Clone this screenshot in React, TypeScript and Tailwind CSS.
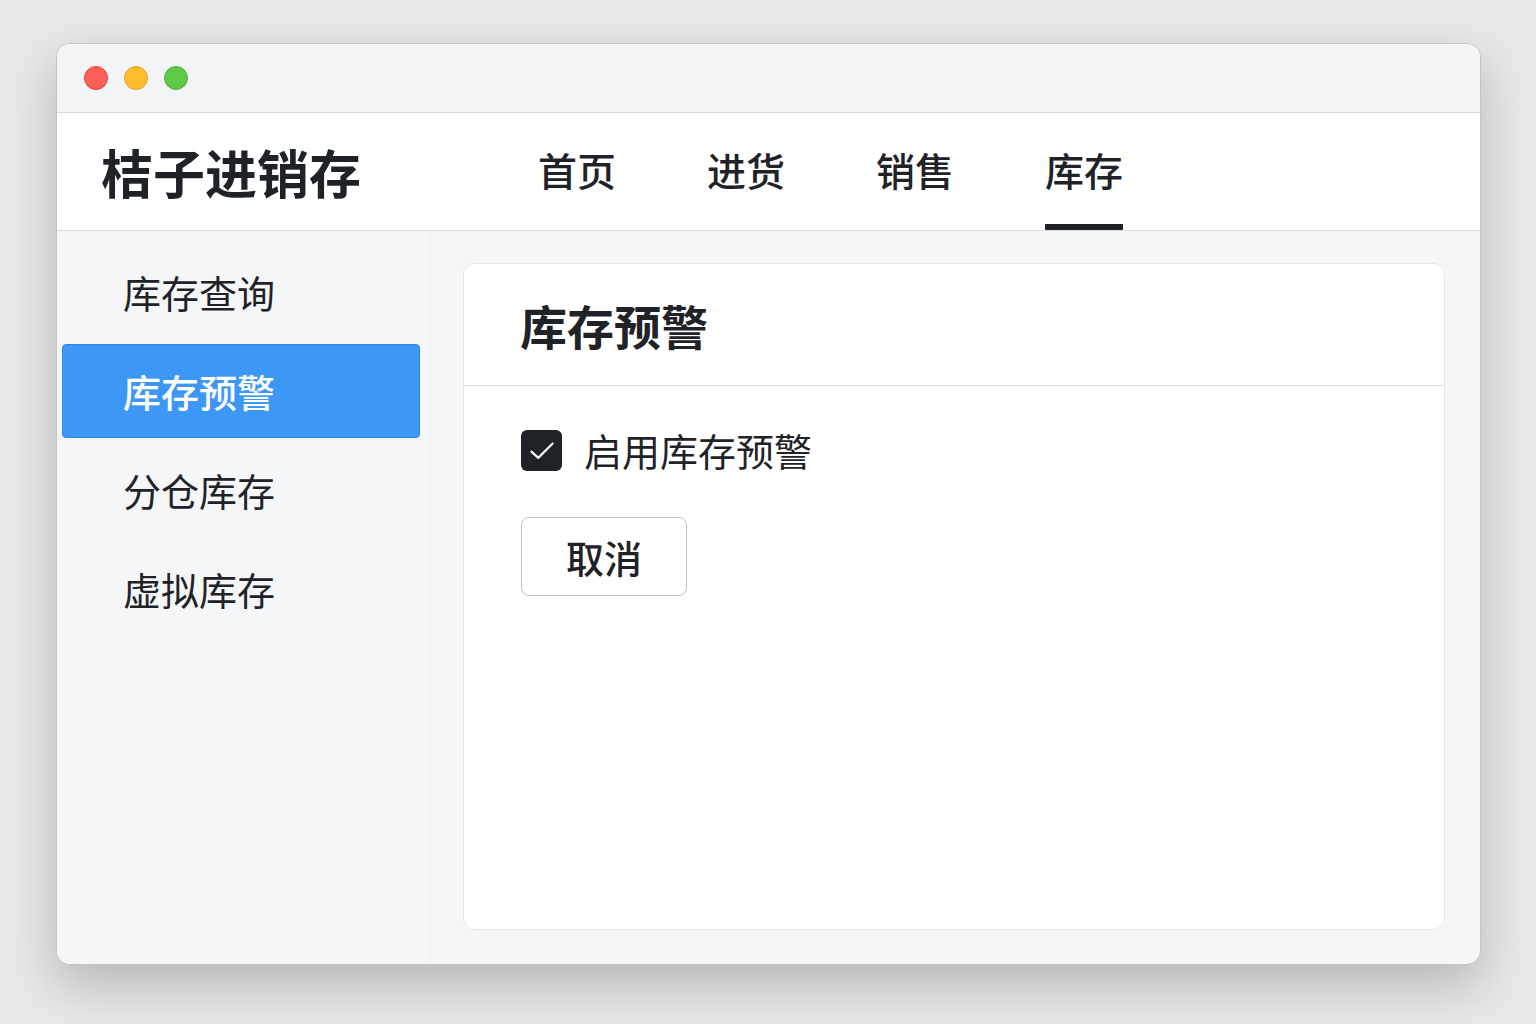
import React from "react";

const font = { fontFamily: '"Noto Sans CJK SC", "Noto Sans", sans-serif' };

export default function App() {
  const navs = ["首页", "进货", "销售", "库存"];
  const side = ["库存查询", "库存预警", "分仓库存", "虚拟库存"];
  return (
    <div className="w-[1536px] h-[1024px] bg-[#e8e8e8] pt-[43px] pl-[56px]" style={font}>
      <div className="w-[1425px] h-[922px] rounded-[14px] border border-[#c4c4c4] bg-[#f5f6f8] overflow-hidden flex flex-col shadow-[0_20px_50px_rgba(0,0,0,0.22)]">
        {/* title bar */}
        <div className="h-[69px] shrink-0 bg-[#f3f4f5] border-b border-[#d9d9d9] flex items-center pl-[27px] gap-[16px]">
          <div className="w-[24px] h-[24px] rounded-full bg-[#fe5f57] border border-[#e0443e]" />
          <div className="w-[24px] h-[24px] rounded-full bg-[#febc2e] border border-[#dea123]" />
          <div className="w-[24px] h-[24px] rounded-full bg-[#5fc846] border border-[#4caf38]" />
        </div>
        {/* header */}
        <div className="h-[118px] shrink-0 bg-white border-b border-[#dedede] flex items-stretch">
          <div className="w-[481px] pl-[44px] flex items-center text-[52px] font-bold text-[#1f2328] leading-none">
            桔子进销存
          </div>
          <div className="flex items-stretch gap-[91px]">
            {navs.map((n) => (
              <div key={n} className="relative flex items-center text-[39px] font-medium text-[#1f2328] leading-none">
                <span className="-mt-[4px]">{n}</span>
                {n === "库存" && (
                  <div className="absolute left-0 right-0 bottom-0 h-[6px] bg-[#1f2328]" />
                )}
              </div>
            ))}
          </div>
        </div>
        {/* body */}
        <div className="flex flex-1 min-h-0">
          <div className="w-[374px] shrink-0 bg-[#f5f6f8] border-r border-[#eceef1] pt-[14px] pl-[5px] pr-[10px] flex flex-col gap-[5px]">
            {side.map((s) => {
              const active = s === "库存预警";
              return (
                <div
                  key={s}
                  className={
                    active
                      ? "h-[94px] rounded-[4px] bg-[#3d97f5] border border-[#2f86e6] text-white flex items-center pl-[60px] text-[38px] font-medium leading-none"
                      : "h-[94px] flex items-center pl-[61px] text-[38px] text-[#1f2328] leading-none"
                  }
                >
                  {s}
                </div>
              );
            })}
          </div>
          <div className="flex-1 pt-[32px] pl-[32px] pr-[35px] pb-[34px]">
            <div className="h-full bg-white border border-[#e4e6ea] rounded-[12px] flex flex-col">
              <div className="h-[122px] shrink-0 border-b border-[#dcdde0] flex items-center pl-[56px] text-[47px] font-bold text-[#1f2328] leading-none">
                <span>库存预警</span>
              </div>
              <div className="pl-[57px] pt-[44px] flex flex-col">
                <div className="flex items-center gap-[22px]">
                  <div className="w-[41px] h-[41px] rounded-[6px] bg-[#1f2328] flex items-center justify-center">
                    <svg width="30" height="30" viewBox="0 0 24 24" fill="none" stroke="white" strokeWidth="1.7" strokeLinecap="round" strokeLinejoin="round">
                      <path d="M3.5 12.5l5.5 5L20.5 6" />
                    </svg>
                  </div>
                  <span className="text-[38px] text-[#1f2328] leading-none -mt-[2px]">启用库存预警</span>
                </div>
                <button className="mt-[46px] w-[166px] h-[79px] rounded-[8px] border border-[#c2c2c2] bg-white text-[38px] font-medium text-[#1f2328] leading-none flex items-center justify-center">
                  取消
                </button>
              </div>
            </div>
          </div>
        </div>
      </div>
    </div>
  );
}
